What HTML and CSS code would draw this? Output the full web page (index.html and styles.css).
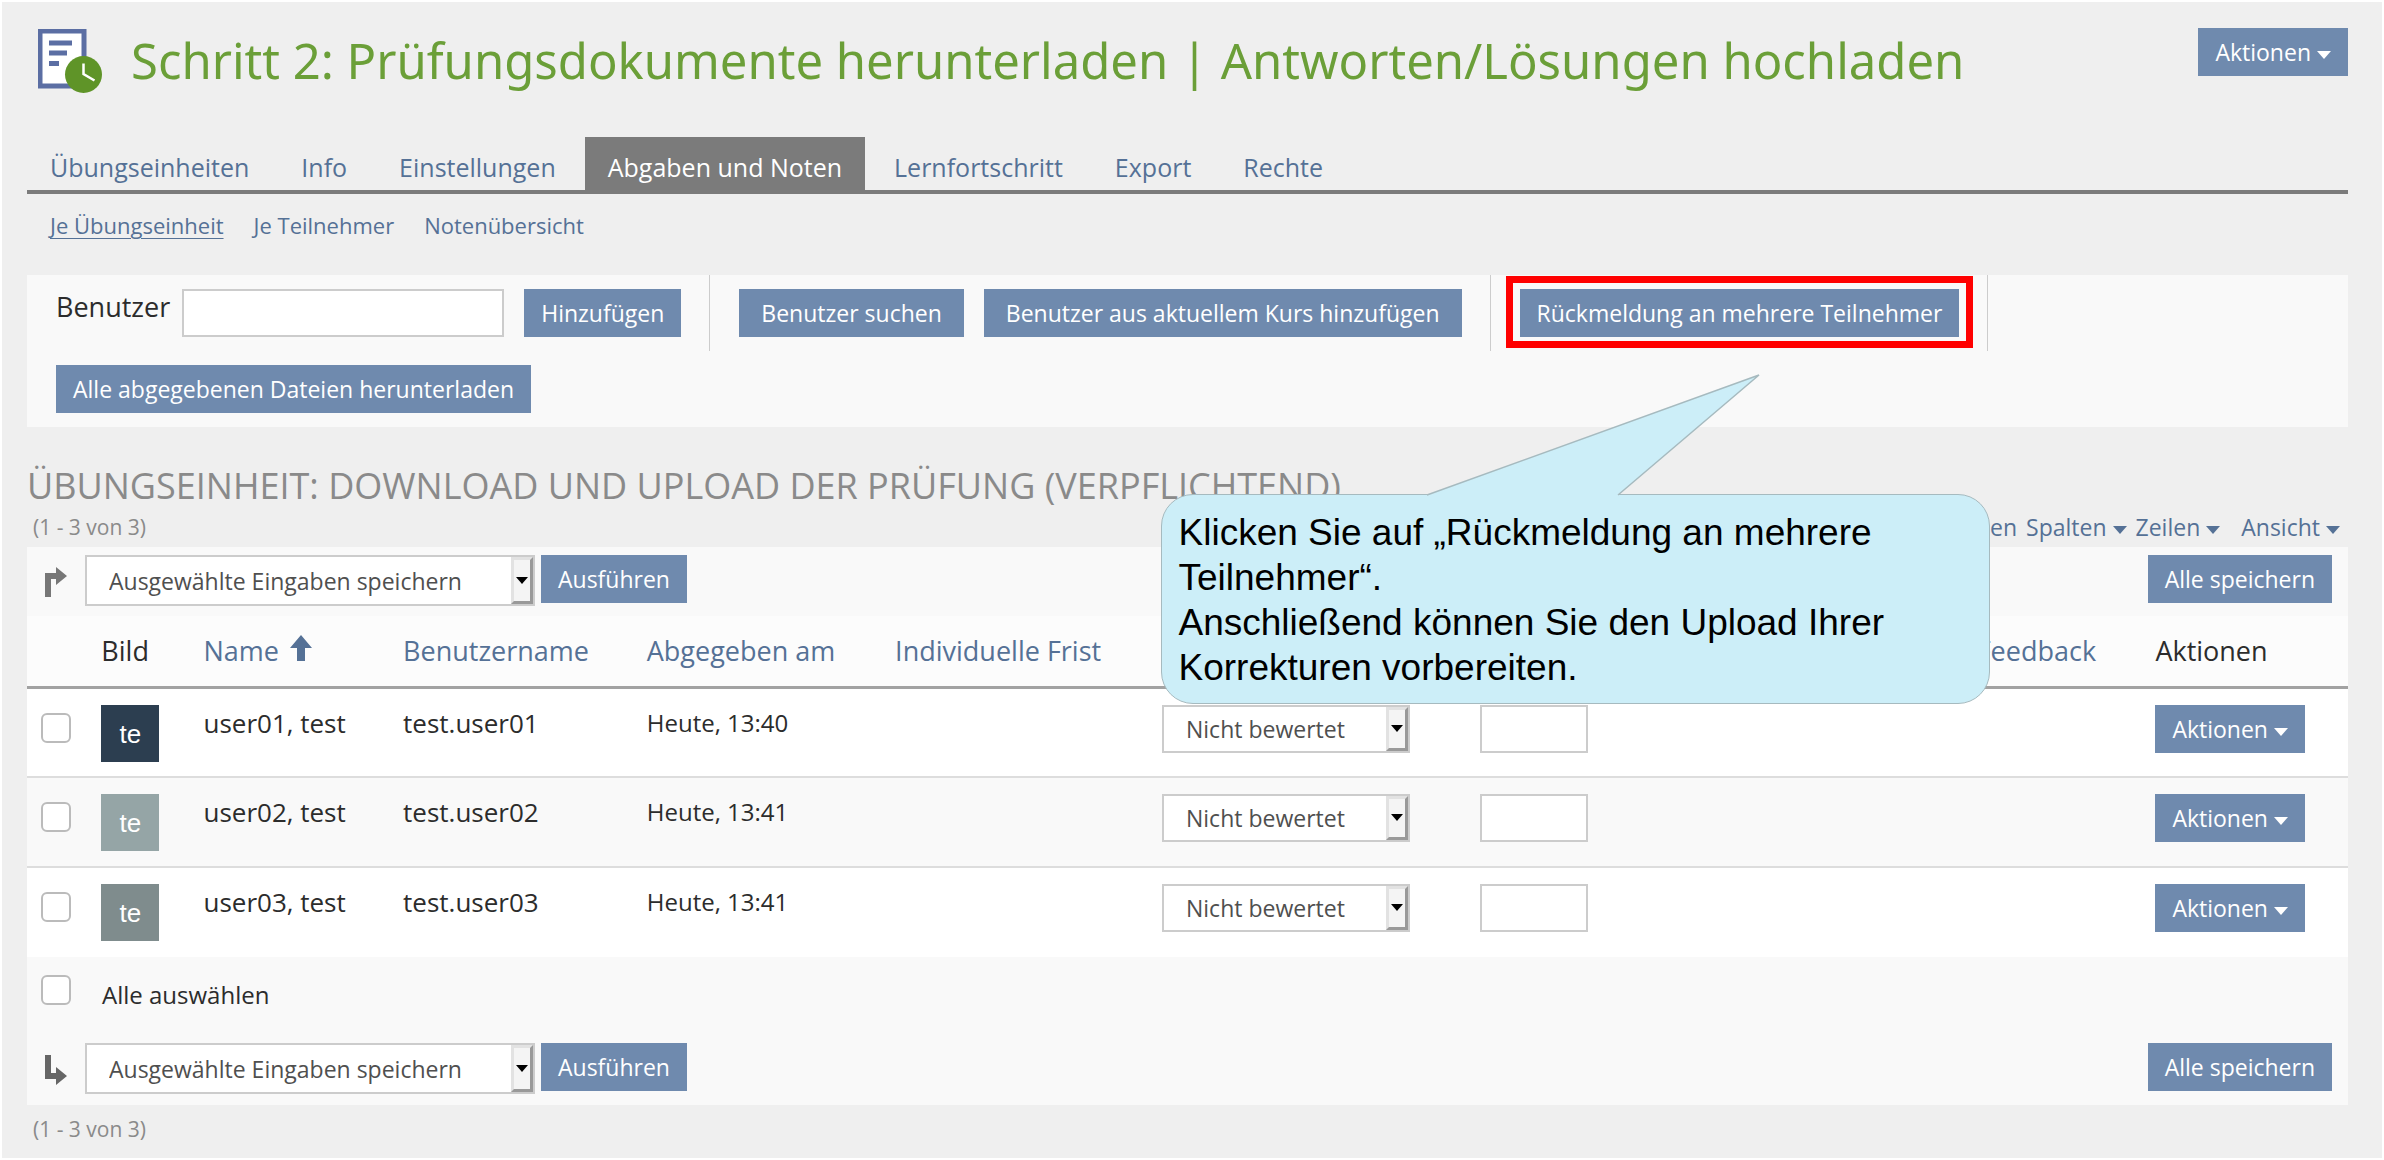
FILE: index.html
```html
<!DOCTYPE html>
<html lang="de">
<head>
<meta charset="utf-8">
<title>Schritt 2: Prüfungsdokumente herunterladen</title>
<link rel="stylesheet" href="styles.css">
</head>
<body>
<div class="page">
  <header class="page-header">
    <svg class="page-icon" viewBox="0 0 64 64" aria-hidden="true">
      <rect x="2" y="2" width="44" height="55" fill="#fff" stroke="#5b6ea3" stroke-width="5"/>
      <path d="M11 14h23M11 24h18M11 34.500h10" stroke="#5b6ea3" stroke-width="5"/>
      <circle cx="45.500" cy="45.500" r="18.500" fill="#5f9428"/>
      <path d="M45.500 34.500v10.500l11 6.500" fill="none" stroke="#fff" stroke-width="2.500"/>
    </svg>
    <h1>Schritt 2: Prüfungsdokumente herunterladen | Antworten/Lösungen hochladen</h1>
    <button class="btn" type="button">Aktionen<span class="caret"></span></button>
  </header>

  <nav class="tabs">
    <a href="#">Übungseinheiten</a>
    <a href="#">Info</a>
    <a href="#">Einstellungen</a>
    <a href="#" class="active">Abgaben und Noten</a>
    <a href="#">Lernfortschritt</a>
    <a href="#">Export</a>
    <a href="#">Rechte</a>
  </nav>
  <nav class="subtabs">
    <a href="#" class="active">Je Übungseinheit</a>
    <a href="#">Je Teilnehmer</a>
    <a href="#">Notenübersicht</a>
  </nav>

  <div class="toolbar">
    <div class="tool-group">
      <label for="user">Benutzer</label>
      <input id="user" class="field user-field" type="text">
      <button class="btn" type="button">Hinzufügen</button>
    </div>
    <div class="tool-group">
      <button class="btn btn-wide" type="button">Benutzer suchen</button>
      <button class="btn btn-wide" type="button">Benutzer aus aktuellem Kurs hinzufügen</button>
    </div>
    <div class="tool-group">
      <div class="highlight">
        <button class="btn" type="button">Rückmeldung an mehrere Teilnehmer</button>
        <div class="callout">
          <svg class="callout-tail" viewBox="0 0 334 122" aria-hidden="true">
            <path d="M1 121L333 1L192 121" fill="#cceef8" stroke="#a6babf" stroke-width="1.500"/>
          </svg>
          <p>Klicken Sie auf „Rückmeldung an mehrere Teilnehmer“.</p>
          <p>Anschließend können Sie den Upload Ihrer Korrekturen vorbereiten.</p>
        </div>
      </div>
    </div>
    <div class="tool-group last">
      <button class="btn" type="button">Alle abgegebenen Dateien herunterladen</button>
    </div>
  </div>

  <h2>Übungseinheit: Download und Upload der Prüfung (Verpflichtend)</h2>
  <div class="table-info">
    <span class="count">(1 - 3 von 3)</span>
    <div class="view-links">
      <a href="#">Anpassen</a>
      <a href="#">Spalten<span class="caret"></span></a>
      <a href="#">Zeilen<span class="caret"></span></a>
      <a href="#" class="view-link">Ansicht<span class="caret"></span></a>
    </div>
  </div>

  <div class="commands">
    <svg class="arrow" viewBox="0 0 24 30" aria-hidden="true"><path d="M1 30V6H12V0L23 9L12 18V12H7V30Z" fill="#777"/></svg>
    <span class="select command-select"><select aria-label="Aktion"><option>Ausgewählte Eingaben speichern</option></select><span class="drop"></span></span>
    <button class="btn" type="button">Ausführen</button>
    <button class="btn save" type="button">Alle speichern</button>
  </div>
  <table>
    <colgroup>
      <col class="c-check"><col class="c-image"><col class="c-name"><col class="c-user"><col class="c-date"><col class="c-due"><col class="c-status"><col class="c-mark"><col class="c-feedback"><col class="c-actions">
    </colgroup>
    <thead>
      <tr>
        <td></td>
        <th scope="col">Bild</th>
        <th scope="col"><a href="#">Name<svg class="sort" viewBox="0 0 22 26" aria-hidden="true"><path d="M11 0L22 13H15V26H7V13H0Z" fill="#557196"/></svg></a></th>
        <th scope="col"><a href="#">Benutzername</a></th>
        <th scope="col"><a href="#">Abgegeben am</a></th>
        <th scope="col"><a href="#">Individuelle Frist</a></th>
        <td></td>
        <td></td>
        <th scope="col"><a href="#">Feedback</a></th>
        <th scope="col">Aktionen</th>
      </tr>
    </thead>
    <tbody>
      <tr>
        <td class="check"><input type="checkbox" aria-label="user01"></td>
        <td><span class="avatar navy">te</span></td>
        <td>user01, test</td>
        <td>test.user01</td>
        <td class="date">Heute, 13:40</td>
        <td></td>
        <td><span class="select status-select"><select aria-label="Status user01"><option>Nicht bewertet</option></select><span class="drop"></span></span></td>
        <td><input class="field mark" type="text" aria-label="Note user01"></td>
        <td></td>
        <td><button class="btn" type="button">Aktionen<span class="caret"></span></button></td>
      </tr>
      <tr>
        <td class="check"><input type="checkbox" aria-label="user02"></td>
        <td><span class="avatar silver">te</span></td>
        <td>user02, test</td>
        <td>test.user02</td>
        <td class="date">Heute, 13:41</td>
        <td></td>
        <td><span class="select status-select"><select aria-label="Status user02"><option>Nicht bewertet</option></select><span class="drop"></span></span></td>
        <td><input class="field mark" type="text" aria-label="Note user02"></td>
        <td></td>
        <td><button class="btn" type="button">Aktionen<span class="caret"></span></button></td>
      </tr>
      <tr>
        <td class="check"><input type="checkbox" aria-label="user03"></td>
        <td><span class="avatar gray">te</span></td>
        <td>user03, test</td>
        <td>test.user03</td>
        <td class="date">Heute, 13:41</td>
        <td></td>
        <td><span class="select status-select"><select aria-label="Status user03"><option>Nicht bewertet</option></select><span class="drop"></span></span></td>
        <td><input class="field mark" type="text" aria-label="Note user03"></td>
        <td></td>
        <td><button class="btn" type="button">Aktionen<span class="caret"></span></button></td>
      </tr>
    </tbody>
  </table>
  <div class="select-all">
    <input type="checkbox" id="all">
    <label for="all">Alle auswählen</label>
  </div>
  <div class="commands bottom">
    <svg class="arrow" viewBox="0 0 24 30" aria-hidden="true"><path d="M1 0V24H12V30L23 21L12 12V18H7V0Z" fill="#666"/></svg>
    <span class="select command-select"><select aria-label="Aktion"><option>Ausgewählte Eingaben speichern</option></select><span class="drop"></span></span>
    <button class="btn" type="button">Ausführen</button>
    <button class="btn save" type="button">Alle speichern</button>
  </div>
  <div class="table-info table-foot"><span class="count">(1 - 3 von 3)</span></div>
</div>
</body>
</html>
```
FILE: styles.css
```css
* { box-sizing: border-box; }

body {
  margin: 0;
  background: #fff;
  color: #2c2c2c;
  font: 26px/36px "Open Sans", sans-serif;
}

.page {
  min-height: calc(100vh - 4px);
  margin: 2px;
  padding: 26px 34px 2px 25px;
  background: #efefef;
}

a { color: #557196; text-decoration: none; }
h1, h2, p { margin: 0; }

.page-header { display: flex; align-items: flex-start; height: 109px; }
.page-icon { width: 64px; height: 64px; margin: 1px 29px 0 11px; flex: none; }
h1 { flex: 1; color: #6b9f38; font-family: "Noto Sans", "Open Sans", sans-serif; font-size: 49px; font-weight: 400; line-height: 64px; white-space: nowrap; }

.btn {
  height: 48px;
  padding: 0 17px;
  border: 0;
  border-radius: 0;
  background: #6f8aae;
  color: #fff;
  font: 23px/30px "Open Sans", sans-serif;
  white-space: nowrap;
}
.btn-wide { padding: 0 22px; }

.caret {
  display: inline-block;
  margin-left: 6px;
  border: 7px solid transparent;
  border-top: 8px solid currentColor;
  border-bottom: 0;
  vertical-align: 2px;
}

.tabs { display: flex; gap: 6px; border-bottom: 4px solid #7b7b7b; font-size: 25px; }
.tabs a { padding: 12px 23px 5px; }
.tabs .active { background: #7b7b7b; color: #fff; }

.subtabs { display: flex; gap: 30px; height: 81px; padding: 13px 23px 0; font-size: 22px; }
.subtabs .active { text-decoration: underline; text-underline-offset: 4px; text-decoration-thickness: 1px; }

.toolbar { display: flex; flex-wrap: wrap; padding-left: 29px; background: #f9f9f9; }
.tool-group { display: flex; gap: 20px; height: 76px; margin-right: 29px; padding: 14px 28px 0 0; border-right: 1px solid #ccc; }
.tool-group.last { border: 0; margin: 0; }
.tool-group label { margin-right: -8px; font-size: 27px; }

.field { height: 48px; border: 2px solid #ccc; background: #fff; font: 23px/30px "Open Sans", sans-serif; }
.user-field { width: 322px; }
.mark { width: 108px; display: block; }

.highlight { position: relative; z-index: 2; height: 48px; }
.highlight::after {
  content: "";
  position: absolute;
  inset: -13px -14px -11px -14px;
  border: 7px solid #f00;
  pointer-events: none;
}

.callout {
  position: absolute;
  top: 205px;
  left: -359px;
  width: 829px;
  height: 210px;
  padding: 15px 17px;
  border: 1px solid #a6babf;
  border-radius: 32px;
  background: #cceef8;
  color: #000;
  font: 37px/45px "Liberation Sans", sans-serif;
}
.callout-tail { position: absolute; left: 264px; top: -121px; width: 334px; height: 122px; }

h2 { margin-top: 35px; color: #8a8a8a; font-size: 36px; font-weight: 400; line-height: 48px; text-transform: uppercase; }

.table-info { display: flex; justify-content: space-between; height: 37px; padding: 0 8px 0 6px; font-size: 21px; line-height: 34px; }
.table-foot { padding-top: 7px; }
.count { color: #8a8a8a; }
.view-links { display: flex; gap: 9px; font-size: 23px; }
.view-link { margin-left: 12px; }

.commands { display: flex; height: 69px; padding: 8px 16px 0; background: #f9f9f9; }
.commands .btn { margin-left: 6px; }
.commands .save { margin-left: auto; }
.arrow { width: 24px; height: 30px; margin: 12px 17px 0 1px; }

.select { position: relative; display: block; }
.select select {
  width: 100%;
  height: 100%;
  padding: 0 22px;
  border: 2px solid #ccc;
  border-radius: 0;
  background: #fff;
  color: #4f4f4f;
  font: 23px/30px "Open Sans", sans-serif;
  appearance: none;
}
.command-select { width: 450px; height: 51px; }
.status-select { width: 248px; height: 48px; }
.drop {
  position: absolute;
  inset: 2px 2px 2px auto;
  width: 22px;
  border: 3px solid;
  border-color: #e2e2e2 #999 #999 #e2e2e2;
  background: #f4f4f4;
  pointer-events: none;
}
.drop::after {
  content: "";
  position: absolute;
  top: calc(50% - 4px);
  left: 2px;
  border: 6px solid transparent;
  border-top: 7px solid #000;
  border-bottom: 0;
}

table { width: 100%; table-layout: fixed; border-collapse: collapse; background: #fff; }
.c-check { width: 2.6%; }
.c-image { width: 4.4%; }
.c-name { width: 8.6%; }
.c-user { width: 10.5%; }
.c-date { width: 10.7%; }
.c-due { width: 11.5%; }
.c-status { width: 13.7%; }
.c-mark { width: 21.4%; }
.c-feedback { width: 7.7%; }
.c-actions { width: 8.9%; }
th, td { padding: 0 0 0 14px; text-align: left; font-weight: 400; white-space: nowrap; }
th { font-size: 27px; }
thead tr { height: 71px; background: #fcfcfc; border-bottom: 3px solid #a2a2a2; }
tbody tr { height: 90px; }
tbody tr + tr { border-top: 2px solid #ddd; }
tbody tr:nth-child(even) { background: #f9f9f9; }
tbody td { padding-top: 16px; vertical-align: top; }
tbody td.check { padding-top: 24px; }
.date { font-size: 24px; }
.sort { width: 22px; height: 26px; margin-left: 11px; }
.avatar { display: block; width: 58px; height: 57px; color: #fff; font: 26px/58px "Liberation Sans", sans-serif; text-align: center; }
.navy { background: #2c3e50; }
.silver { background: #95a5a6; }
.gray { background: #7f8c8d; }

input[type="checkbox"] {
  display: block;
  width: 30px;
  height: 30px;
  margin: 0;
  border: 2px solid #bbb;
  border-radius: 6px;
  background: #fff;
  appearance: none;
}

.select-all { display: flex; gap: 31px; height: 78px; padding: 18px 14px 0; background: #f9f9f9; font-size: 24px; }
.select-all label { padding-top: 2px; }
.bottom { height: 70px; }
```
